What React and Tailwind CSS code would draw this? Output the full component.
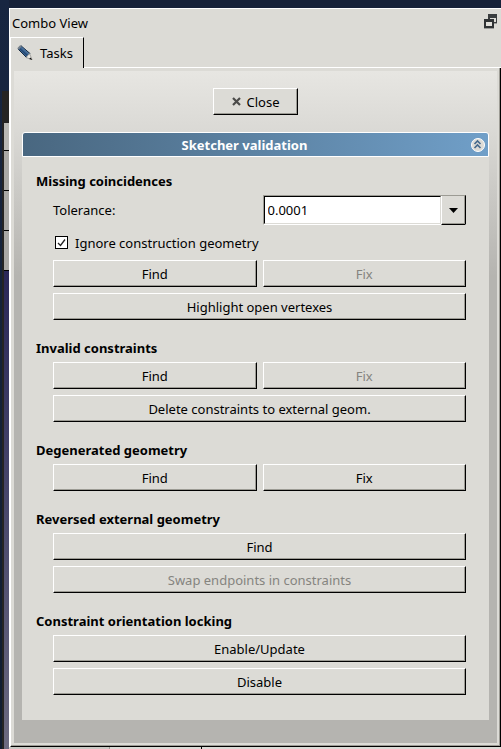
import React from 'react';

const raised =
  'border border-t-white border-l-white border-r-black border-b-black shadow-[inset_-1px_-1px_0_#9c9b94]';

function PushButton({ children, disabled = false, className = 'w-full' }) {
  return (
    <button
      type="button"
      disabled={disabled}
      className={`flex h-[27px] items-center justify-center bg-[#dcdbd6] text-black disabled:text-[#85847f] ${raised} ${className}`}
    >
      {children}
    </button>
  );
}

function Section({ title, children }) {
  return (
    <section>
      <h2 className="mb-[5px] font-bold">{title}</h2>
      <div className="ml-[17px] flex flex-col gap-1.5">{children}</div>
    </section>
  );
}

function Pair({ children }) {
  return <div className="grid grid-cols-2 gap-1.5">{children}</div>;
}

function PencilIcon() {
  return (
    <svg width="16" height="16" viewBox="0 0 16 16" aria-hidden="true">
      <path d="M1 4 4 .8 13 8.500 9.500 12.500Z" fill="#3c6594" stroke="#172b42" />
      <path d="M2.500 3.500 10.500 10.500" stroke="#264a73" strokeWidth="1.500" />
      <path d="M4.500 2.200 12 9" stroke="#55799f" strokeWidth="1" />
      <path d="M1 4 4 .8" stroke="#77828d" strokeWidth="2" />
      <path d="M12.500 8.500 15 14.500 9 12.500Z" fill="#eceae4" stroke="#8b8b88" strokeWidth=".7" />
      <path d="M13.500 12.500 15.300 15 12.200 14Z" fill="#111" />
    </svg>
  );
}

function FloatIcon() {
  return (
    <svg width="13" height="15" viewBox="0 0 13 15" shapeRendering="crispEdges" aria-hidden="true">
      <path d="M4 0h9v9H4z" fill="#3a3d3f" />
      <path d="M6 4h6v4H6z" fill="#dcdbd6" />
      <path d="M4 9h9v1H4z" fill="#9a9b99" />
      <path d="M0 5h10v9H0z" fill="#303335" />
      <path d="M2 8h6v4H2z" fill="#e2e1dc" />
      <path d="M0 14h10v1H0z" fill="#9a9b99" />
    </svg>
  );
}

function CloseIcon() {
  return (
    <svg width="9" height="9" viewBox="0 0 9 9" aria-hidden="true">
      <path d="M1 1 8 8M8 1 1 8" stroke="#4b4b49" strokeWidth="2.200" />
    </svg>
  );
}

function CollapseIcon() {
  return (
    <svg width="14" height="14" viewBox="0 0 14 14" aria-hidden="true">
      <circle cx="7" cy="7" r="6.500" fill="#dcdbd6" stroke="#fff" />
      <path d="M3.500 6 6.500 3 9.500 6M3.500 10 6.500 7 9.500 10" fill="none" stroke="#456a8d" strokeWidth="1.600" />
    </svg>
  );
}

function DesktopEdge() {
  return (
    <div className="flex w-[9px] shrink-0 flex-col bg-gradient-to-b from-[#182641] to-[#101c30]" aria-hidden="true">
      <div className="h-[91px]" />
      <div className="ml-0.5 flex flex-1 flex-col bg-[#252423] pl-0.5 pt-8">
        <div className="h-7 border-b border-black bg-[#b9b8b4]" />
        <div className="h-10 border-b border-black bg-[#aaa9a6]" />
        <div className="h-10 border-b border-black bg-[#aaa9a6]" />
        <div className="h-10 border-b border-black bg-[#aaa9a6]" />
        <div className="flex-1 bg-gradient-to-b from-[#2b2858] to-[#6c6a80]" />
      </div>
    </div>
  );
}

export default function App() {
  return (
    <div className="flex min-h-screen bg-[#17223a] font-['Noto_Sans',sans-serif] text-[13px] leading-[18px] text-black">
      <DesktopEdge />
      <div className="flex min-w-0 flex-1 flex-col pt-2">
        <main className="flex flex-1 flex-col border-l border-t border-white bg-[#dcdbd6]">
          <header className="flex h-7 items-center justify-between pl-0.5 pr-1">
            <h1>Combo View</h1>
            <button type="button" aria-label="Float panel" className="-mt-1">
              <FloatIcon />
            </button>
          </header>
          <div className="flex h-[31px]" role="tablist">
            <button
              type="button"
              role="tab"
              aria-selected="true"
              className="flex items-center gap-[7px] border-l border-r border-t border-l-white border-r-black border-t-white pl-1.5 pr-2.5"
            >
              <PencilIcon />
              Tasks
            </button>
            <div className="flex-1 border-b border-white" />
          </div>
          <div className="flex flex-1 flex-col border-b border-l border-r border-b-black border-l-white border-r-black p-[3px] shadow-[inset_-1px_-1px_0_#9c9b94]">
            <div
              className="flex-1 bg-[linear-gradient(to_bottom,#e7e6e2_0,#dad9d5_60px,#b5b4b0_205px)] px-2 pb-[23px] pt-[17px]"
              role="tabpanel"
            >
              <div className="flex justify-center">
                <PushButton className="w-[85px] gap-1.5">
                  <CloseIcon />
                  Close
                </PushButton>
              </div>
              <div className="mt-[17px]">
                <div className="flex h-[25px] items-center gap-[5px] rounded-t-[3px] border border-white bg-gradient-to-r from-[#496780] to-[#709fc8] pr-[3px] text-white">
                  <h2 className="flex-1 text-center font-bold">Sketcher validation</h2>
                  <button type="button" aria-label="Collapse Sketcher validation">
                    <CollapseIcon />
                  </button>
                </div>
                <div className="flex flex-col gap-[19px] bg-[#dcdbd6] pb-[25px] pl-3.5 pr-[23px] pt-[15px]">
                  <Section title="Missing coincidences">
                    <div className="grid grid-cols-2 items-center gap-1.5">
                      <label htmlFor="tolerance">Tolerance:</label>
                      <div className="flex h-[30px] border border-b-white border-l-[#9c9b94] border-r-black border-t-[#9c9b94]">
                        <input
                          id="tolerance"
                          type="text"
                          defaultValue="0.0001"
                          className="min-w-0 flex-1 border border-b-[#dcdbd6] border-l-black border-r-[#dcdbd6] border-t-black bg-white pl-[3px] outline-none"
                        />
                        <button
                          type="button"
                          aria-label="Show tolerance values"
                          className="-mb-px flex w-6 items-center justify-center border-b border-l border-b-black border-l-white bg-[#dcdbd6] shadow-[inset_-1px_-1px_0_#9c9b94]"
                        >
                          <svg width="9" height="5" viewBox="0 0 9 5" aria-hidden="true">
                            <path d="M0 0h9L4.500 5Z" fill="#000" />
                          </svg>
                        </button>
                      </div>
                    </div>
                    <label className="flex h-[23px] items-center gap-[7px] pl-0.5">
                      <span className="grid">
                        <input
                          type="checkbox"
                          defaultChecked
                          className="peer col-start-1 row-start-1 size-[13px] appearance-none border border-black bg-white"
                        />
                        <svg
                          width="13"
                          height="13"
                          viewBox="0 0 13 13"
                          className="pointer-events-none invisible col-start-1 row-start-1 peer-checked:visible"
                          aria-hidden="true"
                        >
                          <path d="M3 7 5.500 9.500 10 3.500" fill="none" stroke="#222" strokeWidth="1.300" />
                        </svg>
                      </span>
                      Ignore construction geometry
                    </label>
                    <Pair>
                      <PushButton>Find</PushButton>
                      <PushButton disabled>Fix</PushButton>
                    </Pair>
                    <PushButton>Highlight open vertexes</PushButton>
                  </Section>
                  <Section title="Invalid constraints">
                    <Pair>
                      <PushButton>Find</PushButton>
                      <PushButton disabled>Fix</PushButton>
                    </Pair>
                    <PushButton>Delete constraints to external geom.</PushButton>
                  </Section>
                  <Section title="Degenerated geometry">
                    <Pair>
                      <PushButton>Find</PushButton>
                      <PushButton>Fix</PushButton>
                    </Pair>
                  </Section>
                  <Section title="Reversed external geometry">
                    <PushButton>Find</PushButton>
                    <PushButton disabled>Swap endpoints in constraints</PushButton>
                  </Section>
                  <Section title="Constraint orientation locking">
                    <PushButton>Enable/Update</PushButton>
                    <PushButton>Disable</PushButton>
                  </Section>
                </div>
              </div>
            </div>
          </div>
        </main>
        <div className="flex h-0.5 bg-[#dcdbd6]" aria-hidden="true">
          <div className="w-[101px] border-r border-[#9c9b94] bg-[#cbcac5]" />
          <div className="w-[92px] border-r border-black" />
        </div>
      </div>
    </div>
  );
}
